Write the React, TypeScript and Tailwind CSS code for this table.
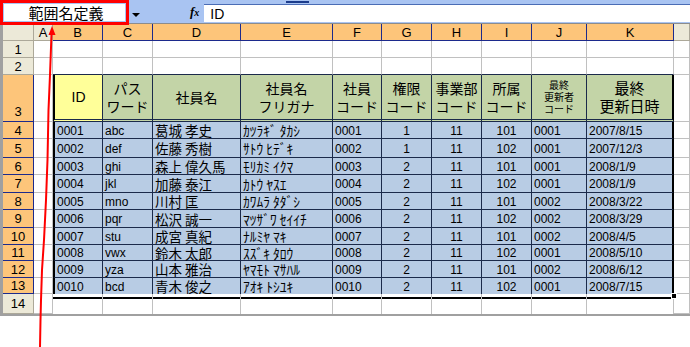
import React from "react";

const JP = "font-['Noto_Sans_CJK_JP','Noto_Sans',sans-serif]";
const LAT = "font-['Liberation_Sans','Noto_Sans_CJK_JP',sans-serif]";

const COLS = ["A", "B", "C", "D", "E", "F", "G", "H", "I", "J", "K", ""];

const headers: string[][] = [
  ["ID"],
  ["パス", "ワード"],
  ["社員名"],
  ["社員名", "フリガナ"],
  ["社員", "コード"],
  ["権限", "コード"],
  ["事業部", "コード"],
  ["所属", "コード"],
  ["最終", "更新者", "コード"],
  ["最終", "更新日時"],
];

const data: string[][] = [
  ["0001", "abc", "葛城 孝史", "ｶﾂﾗｷﾞ ﾀｶｼ", "0001", "1", "11", "101", "0001", "2007/8/15"],
  ["0002", "def", "佐藤 秀樹", "ｻﾄｳ ﾋﾃﾞｷ", "0002", "1", "11", "102", "0001", "2007/12/3"],
  ["0003", "ghi", "森上 偉久馬", "ﾓﾘｶﾐ ｲｸﾏ", "0003", "2", "11", "101", "0001", "2008/1/9"],
  ["0004", "jkl", "加藤 泰江", "ｶﾄｳ ﾔｽｴ", "0004", "2", "11", "102", "0001", "2008/1/9"],
  ["0005", "mno", "川村 匡", "ｶﾜﾑﾗ ﾀﾀﾞｼ", "0005", "2", "11", "101", "0002", "2008/3/22"],
  ["0006", "pqr", "松沢 誠一", "ﾏﾂｻﾞﾜ ｾｲｲﾁ", "0006", "2", "11", "102", "0002", "2008/3/29"],
  ["0007", "stu", "成宮 真紀", "ﾅﾙﾐﾔ ﾏｷ", "0007", "2", "11", "101", "0002", "2008/4/5"],
  ["0008", "vwx", "鈴木 太郎", "ｽｽﾞｷ ﾀﾛｳ", "0008", "2", "11", "102", "0001", "2008/5/10"],
  ["0009", "yza", "山本 雅治", "ﾔﾏﾓﾄ ﾏｻﾊﾙ", "0009", "2", "11", "101", "0002", "2008/6/12"],
  ["0010", "bcd", "青木 俊之", "ｱｵｷ ﾄｼﾕｷ", "0010", "2", "11", "102", "0001", "2008/7/15"],
];

function HeaderCell({ c }: { c: number }) {
  if (c === 0) {
    return <div className="bg-[#ece9d8] border-r border-b border-[#aca899]" />;
  }
  const orange = c >= 2 && c <= 11;
  return (
    <div
      className={
        orange
          ? `bg-[#fdc57a] border-r border-b border-[#1c2a8c] flex items-center justify-center text-[13px] leading-[15px] text-black ${LAT}`
          : `bg-[#ece9d8] border-r border-b border-[#aca899] flex items-center justify-center text-[13px] leading-[15px] text-black ${LAT}`
      }
    >
      {COLS[c - 1]}
    </div>
  );
}

function RowHeader({ r }: { r: number }) {
  const orange = r >= 3 && r <= 13;
  if (r === 3) {
    return (
      <div className={`bg-[#fdc57a] border-r border-b border-[#1c2a8c] flex items-end justify-center pb-[2px] text-[13px] leading-[15px] ${LAT}`}>
        3
      </div>
    );
  }
  return (
    <div
      className={
        orange
          ? `bg-[#fdc57a] border-r border-b border-[#1c2a8c] flex items-center justify-center text-[13px] leading-[15px] ${LAT}`
          : `bg-[#ece9d8] border-r border-b border-[#aca899] flex items-center justify-center text-[13px] leading-[15px] ${LAT}`
      }
    >
      {r}
    </div>
  );
}

function TableHeaderCell({ i }: { i: number }) {
  const lines = headers[i];
  const isFirst = i === 0;
  const isLast = i === 9;
  const small = i === 8;
  let cls = "bg-[#c3d4a7] border-r border-b-[3px] border-double border-[#1b2a4a] flex flex-col items-center justify-center text-black";
  if (isFirst) cls = "bg-[#ffff99] border-r border-b-[3px] border-double border-[#1b2a4a] border-l-2 border-l-black flex flex-col items-center justify-center text-black";
  if (isLast) cls = "bg-[#c3d4a7] border-b-[3px] border-double border-[#1b2a4a] border-r-2 border-r-black flex flex-col items-center justify-center text-black";
  return (
    <div className={cls}>
      {lines.map((l, k) => (
        <div
          key={k}
          className={
            small
              ? `text-[10px] leading-[12px] ${JP}`
              : isLast
              ? `text-[15px] leading-[18px] ${JP}`
              : isFirst
              ? `text-[14px] leading-[17px] ${LAT}`
              : `text-[14px] leading-[18px] ${JP}`
          }
        >
          {l}
        </div>
      ))}
    </div>
  );
}

function DataCell({ i, text, lastRow }: { i: number; text: string; lastRow: boolean }) {
  const center = i === 5 || i === 6 || i === 7;
  const jp = i === 2 || i === 3;
  let border = lastRow ? "border-r border-[#1b2a4a]" : "border-r border-b border-[#1b2a4a]";
  if (i === 0) border = lastRow ? "border-r border-[#1b2a4a] border-l-2 border-l-black" : "border-r border-b border-[#1b2a4a] border-l-2 border-l-black";
  if (i === 9) border = lastRow ? "border-r-2 border-r-black" : "border-b border-[#1b2a4a] border-r-2 border-r-black";
  const align = center ? "justify-center" : "justify-start pl-[2px]";
  const font = jp ? `text-[13.5px] leading-[15px] ${JP}` : `text-[12px] leading-[14px] ${LAT}`;
  return (
    <div className={`bg-[#b8cce4] flex items-center pt-px whitespace-pre text-black ${border} ${align} ${font}`}>
      {text}
    </div>
  );
}

function BodyCell({ r, c }: { r: number; c: number }) {
  const inTable = r >= 3 && r <= 13 && c >= 2 && c <= 11;
  if (inTable) {
    const i = c - 2;
    if (r === 3) return <TableHeaderCell i={i} />;
    return <DataCell i={i} text={data[r - 4][i]} lastRow={r === 13} />;
  }
  if (r === 2 && c >= 2 && c <= 11) {
    return <div className="bg-white border-r border-b border-r-[#c0c0c0] border-b-[#1b2a4a]" />;
  }
  if (r === 14 && c >= 2 && c <= 11) {
    return (
      <div className="bg-white border-r border-[#c0c0c0]">
        <div className="mt-[3px] h-[2px] bg-black" />
      </div>
    );
  }
  return <div className="bg-white border-r border-b border-[#c0c0c0]" />;
}

export default function App() {
  const rows = Array.from({ length: 14 }, (_, k) => k + 1);
  const cols = Array.from({ length: 12 }, (_, k) => k + 1);
  return (
    <div className="relative w-[690px] h-[347px] bg-white overflow-hidden">
      {/* formula bar */}
      <div className="h-[24px] flex bg-[#a9c4f2] border-b border-[#8c8c8c]">
        <div className="w-[129px] h-[25px] border-[3px] border-[#ff0000] bg-[#a9c4f2] p-px z-10">
          <div className={`w-full h-full bg-white flex items-center justify-center pl-[3px] text-[15px] leading-[17px] text-black ${JP}`}>
            範囲名定義
          </div>
        </div>
        <div className="ml-[3px] mt-[13px] w-0 h-0 border-x-[4px] border-x-transparent border-t-[4px] border-t-black" />
        <div className="ml-[50px] mt-[5px] italic font-bold text-[13px] leading-[14px] text-black font-['Liberation_Serif',serif]">
          f<span className="text-[10px]">x</span>
        </div>
        <div className="ml-[5px] flex-1 flex flex-col">
          <div className="h-[4px] flex">
            <div className="ml-[82px] mt-px w-[23px] h-[2px] bg-[#1c3c8c]" />
          </div>
          <div className={`flex-1 mb-[1px] bg-white border-t border-[#4a6cb5] flex items-center pl-[6px] text-[14px] leading-[16px] text-black ${LAT}`}>
            ID
          </div>
        </div>
      </div>

      {/* sheet */}
      <div className="flex">
        <div className="w-[3px] bg-[#a0a0a0]" />
        <div className="grid grid-cols-[31px_19px_50px_50px_88px_92px_49px_50px_50px_50px_55px_87px_16px] grid-rows-[17px_17px_17px_47px_17px_19px_17px_18px_17px_18px_17px_16px_17px_16px_20px]">
          <HeaderCell c={0} />
          {cols.map((c) => (
            <HeaderCell key={`h${c}`} c={c} />
          ))}
          {rows.map((r) => (
            <React.Fragment key={`r${r}`}>
              <RowHeader r={r} />
              {cols.map((c) => (
                <BodyCell key={`c${r}-${c}`} r={r} c={c} />
              ))}
            </React.Fragment>
          ))}
        </div>
      </div>
      <div className="h-[2px] bg-[#a0a0a0]" />

      {/* fill handle */}
      <div className="absolute left-[671px] top-[293px] w-[6px] h-[6px] bg-black border border-white" />

      {/* red annotation arrow */}
      <svg className="absolute left-0 top-0 pointer-events-none" width="690" height="347" viewBox="0 0 690 347">
        <polyline
          points="40,347 40.5,320 41,300 42,270 44,240 46,200 47.5,160 48.5,110 50,75 51.5,34"
          fill="none"
          stroke="#ff0000"
          strokeWidth="2"
        />
        <polygon points="52,26 48.5,35 55.5,35" fill="#ff0000" />
      </svg>
    </div>
  );
}
